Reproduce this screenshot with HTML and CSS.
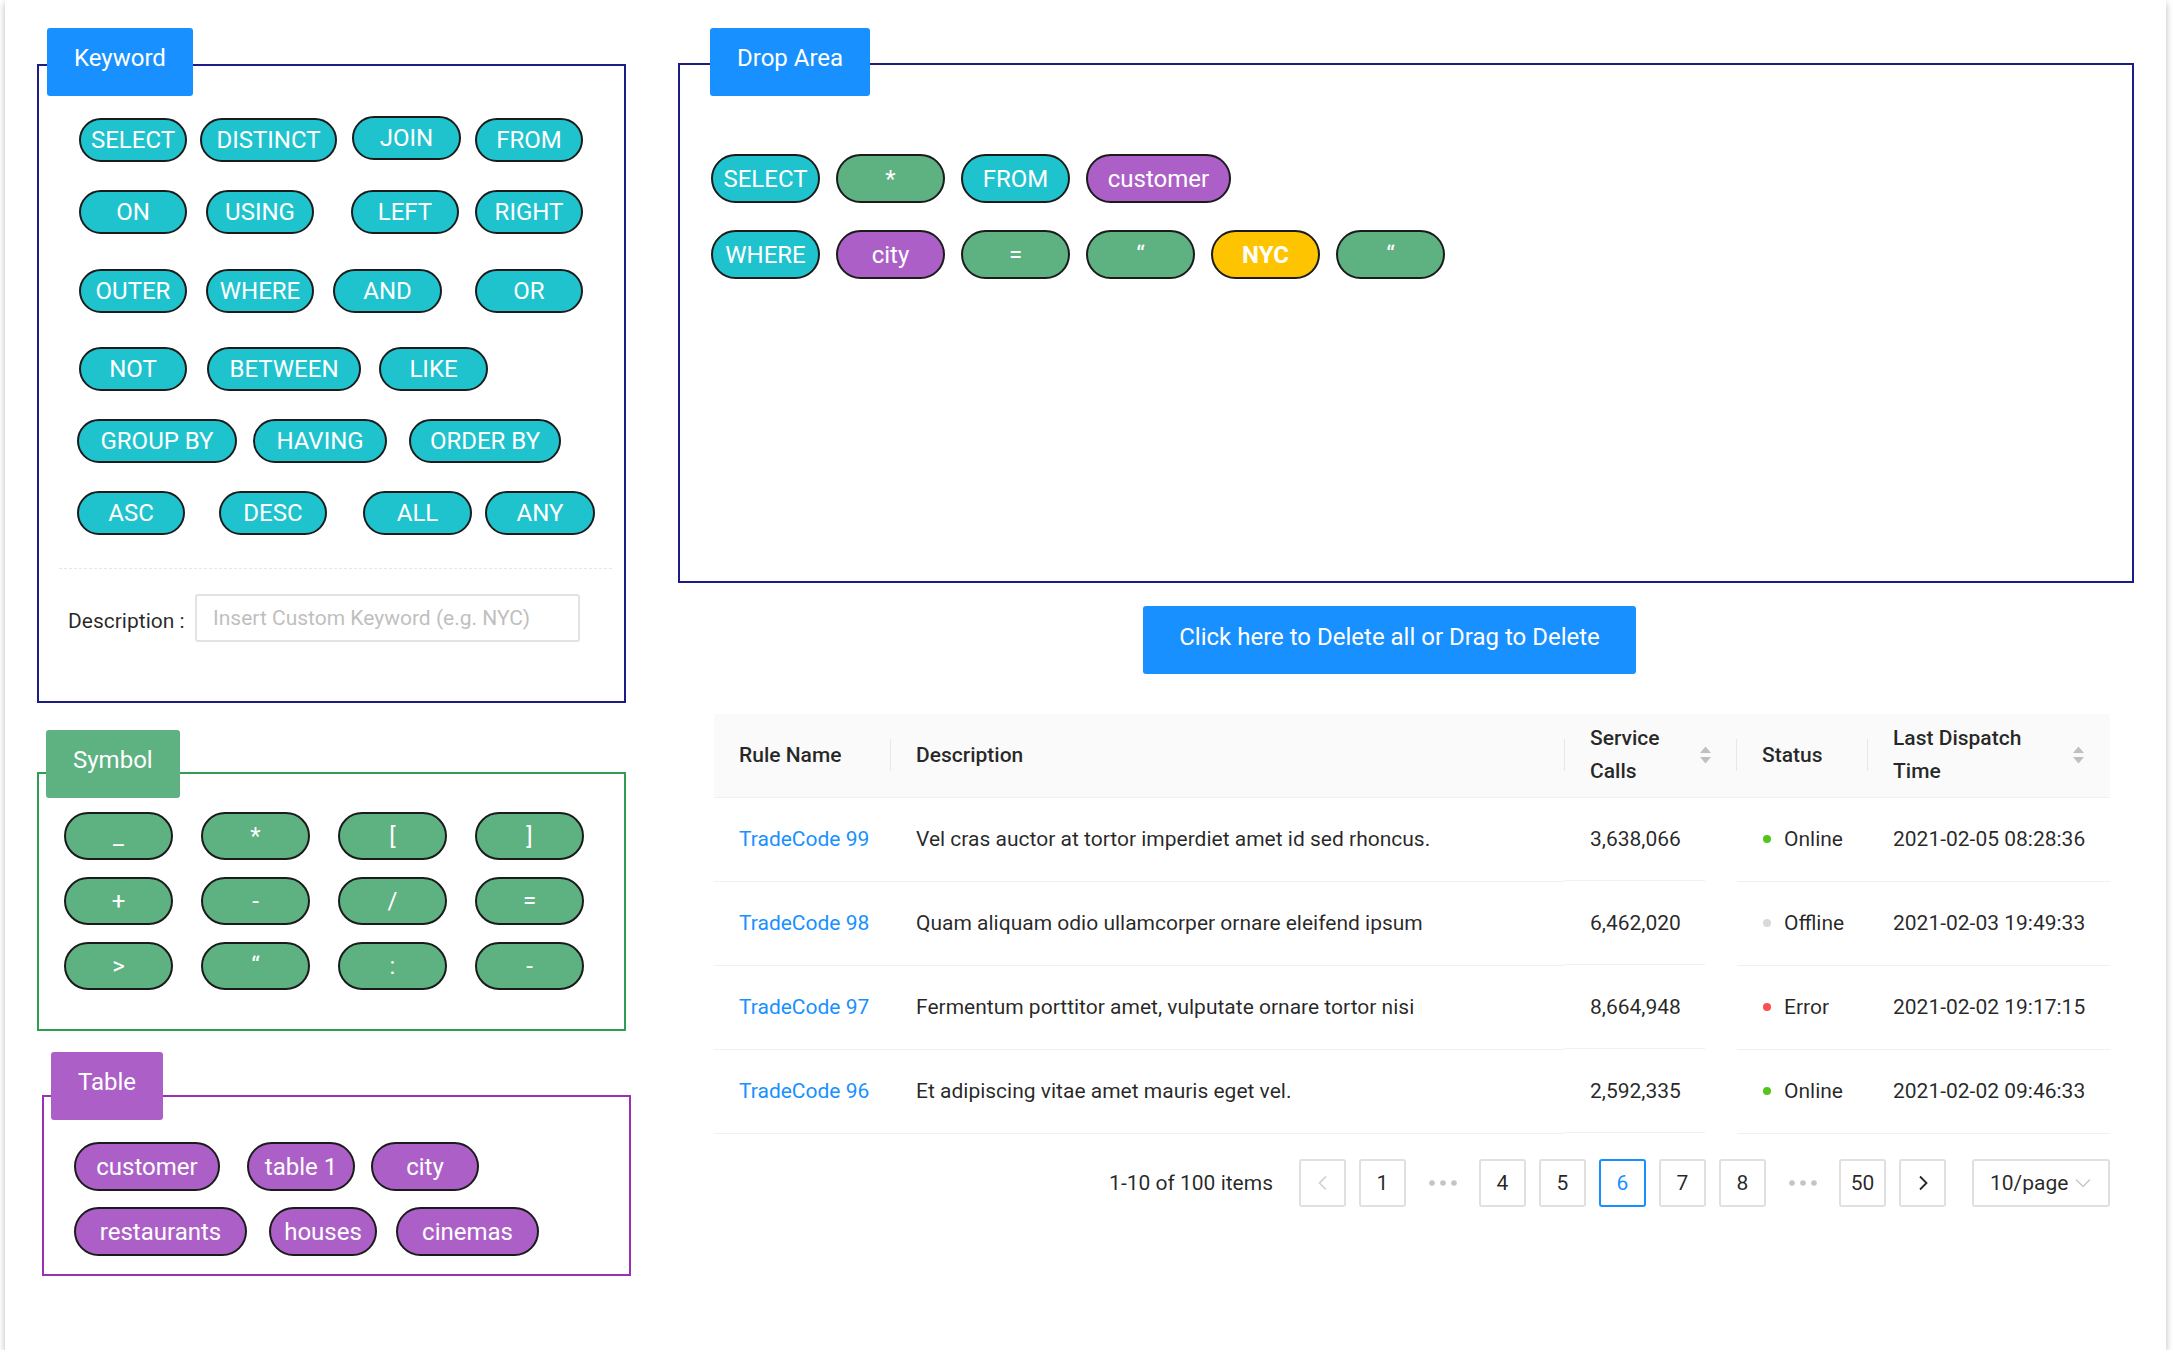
FILE: index.html
```html
<!DOCTYPE html>
<html lang="en">
<head>
<meta charset="utf-8">
<title>SQL Builder</title>
<link rel="stylesheet" href="styles.css">
</head>
<body>
<div class="card">
  <div class="left">
    <section class="group">
      <div class="tab tab-blue tab-kw">Keyword</div>
      <div class="box box-navy kw-box">
        <div class="kw-rows">
          <div class="kw-row">
            <span class="chip kw">SELECT</span>
            <span class="chip kw w137 m13">DISTINCT</span>
            <span class="chip kw w109 m15 up2">JOIN</span>
            <span class="chip kw m14">FROM</span>
          </div>
          <div class="kw-row">
            <span class="chip kw">ON</span>
            <span class="chip kw m19">USING</span>
            <span class="chip kw m37">LEFT</span>
            <span class="chip kw m16">RIGHT</span>
          </div>
          <div class="kw-row mt35">
            <span class="chip kw">OUTER</span>
            <span class="chip kw m19">WHERE</span>
            <span class="chip kw w109 m19">AND</span>
            <span class="chip kw m33">OR</span>
          </div>
          <div class="kw-row mt34">
            <span class="chip kw">NOT</span>
            <span class="chip kw w154 m20">BETWEEN</span>
            <span class="chip kw w109 m18">LIKE</span>
          </div>
          <div class="kw-row shift">
            <span class="chip kw w160">GROUP BY</span>
            <span class="chip kw w134 m16">HAVING</span>
            <span class="chip kw w152 m22">ORDER BY</span>
          </div>
          <div class="kw-row shift">
            <span class="chip kw">ASC</span>
            <span class="chip kw m34">DESC</span>
            <span class="chip kw w109 m36">ALL</span>
            <span class="chip kw w110 m13">ANY</span>
          </div>
        </div>
        <div class="divider"></div>
        <div class="desc-row">
          <label class="desc-label">Description :</label>
          <div class="desc-input">Insert Custom Keyword (e.g. NYC)</div>
        </div>
      </div>
    </section>

    <section class="group group-symbol">
      <div class="tab tab-green tab-sym">Symbol</div>
      <div class="box box-green sym-box">
        <span class="chip sym">_</span>
        <span class="chip sym">*</span>
        <span class="chip sym">[</span>
        <span class="chip sym">]</span>
        <span class="chip sym">+</span>
        <span class="chip sym">-</span>
        <span class="chip sym">/</span>
        <span class="chip sym">=</span>
        <span class="chip sym">&gt;</span>
        <span class="chip sym">&ldquo;</span>
        <span class="chip sym">:</span>
        <span class="chip sym">-</span>
      </div>
    </section>

    <section class="group group-table">
      <div class="tab tab-purple tab-tbl">Table</div>
      <div class="box box-purple tbl-box">
        <div class="tbl-row">
          <span class="chip tb w146">customer</span>
          <span class="chip tb m27">table 1</span>
          <span class="chip tb m16">city</span>
        </div>
        <div class="tbl-row">
          <span class="chip tb w173">restaurants</span>
          <span class="chip tb m22">houses</span>
          <span class="chip tb w143 m19">cinemas</span>
        </div>
      </div>
    </section>
  </div>

  <div class="right">
    <section class="group">
      <div class="tab tab-blue tab-drop">Drop Area</div>
      <div class="box box-navy drop-box">
        <div class="drop-row">
          <span class="chip kw dc">SELECT</span>
          <span class="chip sym dc">*</span>
          <span class="chip kw dc">FROM</span>
          <span class="chip tb dc w145">customer</span>
        </div>
        <div class="drop-row">
          <span class="chip kw dc">WHERE</span>
          <span class="chip tb dc">city</span>
          <span class="chip sym dc">=</span>
          <span class="chip sym dc">&ldquo;</span>
          <span class="chip yel dc">NYC</span>
          <span class="chip sym dc">&ldquo;</span>
        </div>
      </div>
    </section>

    <button class="delete-btn">Click here to Delete all or Drag to Delete</button>

    <div class="table-wrap">
      <table class="rules">
        <colgroup>
          <col class="c-name"><col class="c-desc"><col class="c-calls"><col class="c-status"><col class="c-time">
        </colgroup>
        <thead>
          <tr>
            <th class="sep">Rule Name</th>
            <th class="sep">Description</th>
            <th class="sep"><div class="th-sort"><span>Service Calls</span><svg class="sorter" width="13" height="20" viewBox="0 0 13 20"><path d="M6.5 1.5 L12 8 H1 Z" fill="#bfbfbf"/><path d="M6.5 18.5 L12 12 H1 Z" fill="#bfbfbf"/></svg></div></th>
            <th class="sep">Status</th>
            <th><div class="th-sort"><span>Last Dispatch Time</span><svg class="sorter" width="13" height="20" viewBox="0 0 13 20"><path d="M6.5 1.5 L12 8 H1 Z" fill="#bfbfbf"/><path d="M6.5 18.5 L12 12 H1 Z" fill="#bfbfbf"/></svg></div></th>
          </tr>
        </thead>
        <tbody>
          <tr>
            <td><a class="link">TradeCode 99</a></td>
            <td>Vel cras auctor at tortor imperdiet amet id sed rhoncus.</td>
            <td class="calls">3,638,066</td>
            <td><span class="dot dot-green"></span>Online</td>
            <td>2021-02-05 08:28:36</td>
          </tr>
          <tr>
            <td><a class="link">TradeCode 98</a></td>
            <td>Quam aliquam odio ullamcorper ornare eleifend ipsum</td>
            <td class="calls">6,462,020</td>
            <td><span class="dot dot-gray"></span>Offline</td>
            <td>2021-02-03 19:49:33</td>
          </tr>
          <tr>
            <td><a class="link">TradeCode 97</a></td>
            <td>Fermentum porttitor amet, vulputate ornare tortor nisi</td>
            <td class="calls">8,664,948</td>
            <td><span class="dot dot-red"></span>Error</td>
            <td>2021-02-02 19:17:15</td>
          </tr>
          <tr>
            <td><a class="link">TradeCode 96</a></td>
            <td>Et adipiscing vitae amet mauris eget vel.</td>
            <td class="calls">2,592,335</td>
            <td><span class="dot dot-green"></span>Online</td>
            <td>2021-02-02 09:46:33</td>
          </tr>
        </tbody>
      </table>

      <div class="pagination">
        <span class="total">1-10 of 100 items</span>
        <span class="page disabled"><svg width="14" height="16" viewBox="0 0 14 16"><path d="M10 1.5 L3.5 8 L10 14.5" fill="none" stroke="#d0d0d0" stroke-width="1.6"/></svg></span>
        <span class="page">1</span>
        <span class="ellipsis"><svg width="28" height="8" viewBox="0 0 28 8"><circle cx="3" cy="4" r="2.8" fill="#c4c4c4"/><circle cx="14" cy="4" r="2.8" fill="#c4c4c4"/><circle cx="25" cy="4" r="2.8" fill="#c4c4c4"/></svg></span>
        <span class="page">4</span>
        <span class="page">5</span>
        <span class="page active">6</span>
        <span class="page">7</span>
        <span class="page">8</span>
        <span class="ellipsis"><svg width="28" height="8" viewBox="0 0 28 8"><circle cx="3" cy="4" r="2.8" fill="#c4c4c4"/><circle cx="14" cy="4" r="2.8" fill="#c4c4c4"/><circle cx="25" cy="4" r="2.8" fill="#c4c4c4"/></svg></span>
        <span class="page">50</span>
        <span class="page"><svg width="14" height="16" viewBox="0 0 14 16"><path d="M4 1.5 L10.5 8 L4 14.5" fill="none" stroke="#262626" stroke-width="1.8"/></svg></span>
        <span class="size-select">10/page<svg width="16" height="10" viewBox="0 0 16 10"><path d="M1 1.5 L8 8.5 L15 1.5" fill="none" stroke="#c8c8c8" stroke-width="1.5"/></svg></span>
      </div>
    </div>
  </div>
</div>
</body>
</html>
```

FILE: styles.css
```css
* { box-sizing: border-box; }
html, body { margin: 0; padding: 0; background: #fff; }
body {
  font-family: Roboto, "Noto Sans", "Liberation Sans", Arial, sans-serif;
  color: rgba(0, 0, 0, 0.85);
}

.card {
  margin-left: 5px;
  width: 2161px;
  height: 1350px;
  background: #fff;
  box-shadow: 0 3px 7px rgba(0, 0, 0, 0.28);
  display: flex;
  gap: 52px;
  padding: 28px 32px 0 32px;
}

.left { width: 589px; display: flex; flex-direction: column; flex: none; }
.right { width: 1456px; display: flex; flex-direction: column; flex: none; }

.group { display: flex; flex-direction: column; }
.group-symbol { margin-top: 27px; }
.group-table { margin-top: 21px; margin-left: 5px; width: 589px; }

/* tabs overlapping the group frame */
.tab {
  position: relative;
  z-index: 1;
  align-self: flex-start;
  height: 68px;
  padding: 11px 27px 0;
  line-height: 38px;
  font-size: 24px;
  color: #fff;
  border-radius: 3px;
  white-space: nowrap;
}
.tab-blue { background: #1890ff; }
.tab-green { background: #5eb180; }
.tab-purple { background: #ac60c7; }
.tab-kw { margin-left: 10px; }
.tab-sym { margin-left: 9px; }
.tab-tbl { margin-left: 9px; }
.tab-drop { margin-left: 32px; }

.box { border: 2px solid; }
.box-navy { border-color: #1c1c86; }
.box-green { border-color: #2e9e52; }
.box-purple { border-color: #9a30b6; }

/* keyword box */
.kw-box { margin-top: -32px; padding: 52px 12px 59px 0; }
.kw-rows { display: flex; flex-direction: column; gap: 28px; padding-left: 40px; }
.kw-row { display: flex; align-items: flex-start; }
.kw-row.mt35 { margin-top: 7px; }
.kw-row.mt34 { margin-top: 6px; }
.kw-row.shift { margin-left: -2px; }

/* chips */
.chip {
  flex: none;
  display: flex;
  align-items: center;
  justify-content: center;
  width: 108px;
  height: 44px;
  border: 2px solid #1b1b1b;
  border-radius: 26px;
  color: #fff;
  font-size: 24px;
  line-height: 1;
  white-space: nowrap;
}
.kw { background: #1fc3ce; }
.sym { background: #5eb180; }
.tb { background: #ac60c7; }
.yel { background: #ffc400; font-weight: 700; }

.w109 { width: 109px; }
.w110 { width: 110px; }
.w134 { width: 134px; }
.w137 { width: 137px; }
.w143 { width: 143px; }
.w145 { width: 145px; }
.w146 { width: 146px; }
.w152 { width: 152px; }
.w154 { width: 154px; }
.w160 { width: 160px; }
.w173 { width: 173px; }

.m13 { margin-left: 13px; }
.m14 { margin-left: 14px; }
.m15 { margin-left: 15px; }
.m16 { margin-left: 16px; }
.m18 { margin-left: 18px; }
.m19 { margin-left: 19px; }
.m20 { margin-left: 20px; }
.m22 { margin-left: 22px; }
.m27 { margin-left: 27px; }
.m33 { margin-left: 33px; }
.m34 { margin-left: 34px; }
.m36 { margin-left: 36px; }
.m37 { margin-left: 37px; }
.up2 { margin-top: -2px; }

.divider {
  margin: 33px 0 0 20px;
  height: 0;
  border-top: 1px dashed #e6e6e6;
}

.desc-row {
  display: flex;
  align-items: center;
  margin-top: 25px;
  padding-left: 29px;
}
.desc-label {
  font-size: 21px;
  color: rgba(0, 0, 0, 0.85);
  margin-top: 6px;
  width: 127px;
}
.desc-input {
  width: 385px;
  height: 48px;
  border: 2px solid #e3e3e3;
  border-radius: 3px;
  padding-left: 16px;
  display: flex;
  align-items: center;
  font-size: 21px;
  color: #bfbfbf;
}

/* symbol box */
.sym-box {
  margin-top: -26px;
  display: grid;
  grid-template-columns: repeat(4, 109px);
  column-gap: 28px;
  row-gap: 17px;
  padding: 38px 0 39px 25px;
}
.sym-box .chip { width: 109px; height: 48px; }

/* table chips box */
.tbl-box {
  margin-top: -25px;
  padding: 45px 0 18px 30px;
  display: flex;
  flex-direction: column;
  gap: 16px;
}
.tbl-row { display: flex; }
.tbl-box .chip { height: 49px; }

/* drop area */
.drop-box {
  margin-top: -33px;
  height: 520px;
  padding: 89px 0 0 31px;
  display: flex;
  flex-direction: column;
  gap: 27px;
}
.drop-row { display: flex; gap: 16px; }
.dc { width: 109px; height: 49px; }
.dc.w145 { width: 145px; }

.delete-btn {
  margin: 23px 0 0 465px;
  width: 493px;
  height: 68px;
  border: none;
  border-radius: 3px;
  background: #1890ff;
  color: #fff;
  font-family: inherit;
  font-size: 24px;
  padding: 0 0 6px;
  align-self: flex-start;
}

/* table */
.table-wrap { margin: 40px 0 0 36px; width: 1396px; }
.rules {
  width: 1396px;
  border-collapse: collapse;
  table-layout: fixed;
  font-size: 21px;
}
.c-name { width: 177px; }
.c-desc { width: 674px; }
.c-calls { width: 172px; }
.c-status { width: 131px; }
.c-time { width: 242px; }

.rules th {
  position: relative;
  height: 83px;
  padding: 0 25px;
  background: #fafafa;
  text-align: left;
  font-weight: 500;
  line-height: 33px;
  color: rgba(0, 0, 0, 0.85);
  border-bottom: 1px solid #f0f0f0;
}
.rules th.sep::after {
  content: "";
  position: absolute;
  right: 0;
  top: 50%;
  width: 1px;
  height: 32px;
  margin-top: -16px;
  background: rgba(0, 0, 0, 0.07);
}
.th-sort { display: flex; align-items: center; justify-content: space-between; }
.th-sort span { flex: 1; }
.sorter { flex: none; margin-left: 6px; }

.rules td {
  height: 84px;
  padding: 0 25px;
  border-bottom: 1px solid #f0f0f0;
  white-space: nowrap;
  color: rgba(0, 0, 0, 0.85);
}
.rules td.calls {
  border-bottom: none;
  background: linear-gradient(#f0f0f0, #f0f0f0) left bottom / calc(100% - 32px) 1px no-repeat;
}
.link { color: #1890ff; text-decoration: none; }

.dot {
  display: inline-block;
  width: 8px;
  height: 8px;
  border-radius: 50%;
  margin: 0 13px 3px 1px;
  vertical-align: middle;
}
.dot-green { background: #52c41a; }
.dot-gray { background: #d9d9d9; }
.dot-red { background: #ff4d4f; }

/* pagination */
.pagination {
  margin-top: 25px;
  display: flex;
  justify-content: flex-end;
  align-items: center;
  gap: 13px;
  font-size: 21px;
}
.total { margin-right: 13px; color: rgba(0, 0, 0, 0.85); }
.page, .ellipsis {
  width: 47px;
  height: 48px;
  display: flex;
  align-items: center;
  justify-content: center;
}
.page {
  border: 2px solid #e0e0e0;
  border-radius: 3px;
  color: rgba(0, 0, 0, 0.85);
}
.page.active { border-color: #1890ff; color: #1890ff; }
.size-select {
  margin-left: 13px;
  width: 138px;
  height: 48px;
  border: 2px solid #e0e0e0;
  border-radius: 3px;
  display: flex;
  align-items: center;
  justify-content: space-between;
  padding: 0 17px 0 16px;
  color: rgba(0, 0, 0, 0.85);
}
```
